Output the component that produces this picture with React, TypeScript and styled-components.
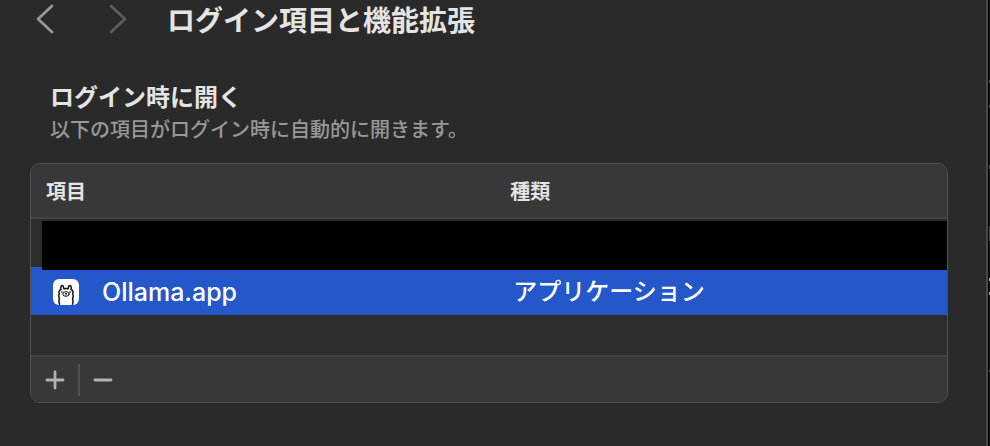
import React from "react";
import styled, { createGlobalStyle } from "styled-components";

const GlobalStyle = createGlobalStyle`
  * { box-sizing: border-box; }
  html, body, #root { height: 100%; }
  body {
    margin: 0;
    background: #000;
    color: #e4e4e4;
    font-family: Inter, "Noto Sans CJK JP", sans-serif;
  }
  button { font: inherit; color: inherit; background: none; border: 0; padding: 0; }
`;

const Screen = styled.div`
  display: flex;
  min-height: 100vh;
  overflow: hidden;
`;

const Pane = styled.main`
  flex: 1;
  min-width: 0;
  padding: 0 38px 0 30px;
  background: #2a2a2a;
  border-right: 2px solid #484848;
`;

const Backdrop = styled.svg`
  flex: none;
  width: 2px;
  height: 446px;
`;

const TitleBar = styled.header`
  display: flex;
  align-items: center;
  height: 38px;
`;

const NavButton = styled.button<{ $dim?: boolean }>`
  display: flex;
  justify-content: center;
  width: 30px;
  margin-right: 43px;
  color: ${(p) => (p.$dim ? "#5c5c5c" : "#979797")};

  & + & { margin-right: 34px; }
`;

const Title = styled.h1`
  margin: 0;
  padding-top: 4px;
  font-size: 28px;
  line-height: 36px;
  font-weight: 700;
  white-space: nowrap;
`;

const Intro = styled.section`
  padding: 43px 20px 18px;
`;

const Heading = styled.h2`
  margin: 0;
  font-size: 24px;
  line-height: 34px;
  font-weight: 700;
`;

const Description = styled.p`
  margin: 0;
  font-size: 20px;
  line-height: 30px;
  font-weight: 500;
  color: #989898;
`;

const Card = styled.section`
  overflow: hidden;
  background: #2d2d2d;
  border: 1px solid #515151;
  border-radius: 10px;
`;

const ItemTable = styled.table`
  width: 100%;
  table-layout: fixed;
  border-collapse: separate;
  border-spacing: 0;
  text-align: left;
`;

const HeadCell = styled.th<{ $width: string; $inset: number }>`
  width: ${(p) => p.$width};
  height: 55px;
  padding: 2px 0 0 ${(p) => p.$inset}px;
  background: #383838;
  border-bottom: 2px solid #424242;
  font-size: 20px;
  line-height: 28px;
  font-weight: 700;
`;

const Row = styled.tr<{ $selected?: boolean }>`
  height: 48px;
  background: ${(p) => (p.$selected ? "#2457ca" : "transparent")};
  color: #fff;
`;

const Cell = styled.td<{ $inset?: number }>`
  position: relative;
  padding: 2px 0 0 ${(p) => p.$inset ?? 0}px;
  font-size: 24px;
  line-height: 34px;
  font-weight: 500;
`;

const Redaction = styled.div`
  position: absolute;
  inset: 2px 0 -3px 11px;
  z-index: 1;
  background: #000;
`;

const AppName = styled.div`
  display: flex;
  align-items: center;
  gap: 23px;
  font-size: 25px;
`;

const EmptyArea = styled.div`
  height: 40px;
`;

const Footer = styled.footer`
  display: flex;
  align-items: center;
  height: 47px;
  background: #383838;
  border-top: 2px solid #424242;
`;

const ToolButton = styled.button`
  display: flex;
  align-items: center;
  justify-content: center;
  width: 47px;
  height: 32px;
  color: #b2b2b2;

  & + & { border-left: 2px solid #505050; }
`;

const Chevron = ({ flip }: { flip?: boolean }) => (
  <svg width="18" height="30" viewBox="0 0 18 30" fill="none" stroke="currentColor"
    strokeWidth="2.8" strokeLinecap="round" strokeLinejoin="round">
    <path d={flip ? "M2 2 16 15 2 28" : "M16 2 2 15 16 28"} />
  </svg>
);

const Glyph = ({ plus }: { plus?: boolean }) => (
  <svg width="20" height="20" viewBox="0 0 20 20" stroke="currentColor" strokeWidth="2.8" strokeLinecap="round">
    <path d={plus ? "M2 10H18M10 2V18" : "M2 10H18"} />
  </svg>
);

const LlamaIcon = () => (
  <svg width="26" height="26" viewBox="0 0 26 26" fill="none" stroke="#111" strokeWidth="1.5"
    strokeLinecap="round" strokeLinejoin="round">
    <rect width="26" height="26" rx="6" fill="#fff" stroke="none" />
    <path d="M6.6 25.2C5.8 23.4 5.8 21.6 6.5 19.8 5.7 18.2 5.6 16.4 6.3 14.800 5.500 12.800 6.300 11 8 10.500 7.500 8.500 8 6.500 9 6.500S10.700 7.900 11 9.900C12.200 9.300 13.800 9.300 15 9.900 15.300 7.900 16 6.500 17 6.500S18.500 8.500 18 10.500C19.700 11 20.500 12.800 19.700 14.800 20.400 16.400 20.300 18.200 19.500 19.800 20.200 21.600 20.200 23.400 19.400 25.200" />
    <ellipse cx="13" cy="15" rx="3.200" ry="2.300" strokeWidth="1" />
    <path d="M12.300 14.500 13 15 13.700 14.500M13 15V15.800" strokeWidth="1" />
    <path d="M8.800 13h.2M17 13h.2" strokeWidth="1.600" />
  </svg>
);

export default function App() {
  return (
    <>
      <GlobalStyle />
      <Screen>
        <Pane>
          <TitleBar>
            <NavButton aria-label="戻る"><Chevron /></NavButton>
            <NavButton aria-label="進む" $dim><Chevron flip /></NavButton>
            <Title>ログイン項目と機能拡張</Title>
          </TitleBar>
          <Intro>
            <Heading>ログイン時に開く</Heading>
            <Description>以下の項目がログイン時に自動的に開きます。</Description>
          </Intro>
          <Card>
            <ItemTable>
              <thead>
                <tr>
                  <HeadCell $width="52%" $inset={15}>項目</HeadCell>
                  <HeadCell $width="48%" $inset={3}>種類</HeadCell>
                </tr>
              </thead>
              <tbody>
                <Row>
                  <Cell colSpan={2}><Redaction /></Cell>
                </Row>
                <Row $selected>
                  <Cell $inset={22}><AppName><LlamaIcon />Ollama.app</AppName></Cell>
                  <Cell $inset={6}>アプリケーション</Cell>
                </Row>
              </tbody>
            </ItemTable>
            <EmptyArea />
            <Footer>
              <ToolButton aria-label="追加"><Glyph plus /></ToolButton>
              <ToolButton aria-label="削除"><Glyph /></ToolButton>
            </Footer>
          </Card>
        </Pane>
        <Backdrop viewBox="0 0 2 446" aria-hidden="true">
          <rect width="2" height="446" fill="#0b0b0b" />
          <path d="M1 80h1v3H1zM1 105h1v3H1zM1 165h1v4H1zM1 370h1v2H1z" fill="#4a4a4a" />
          <path d="M1 226h1v15H1z" fill="#6b3527" />
          <path d="M1 278h1v3H1zM1 292h1v3H1z" fill="#b0b0b0" />
        </Backdrop>
      </Screen>
    </>
  );
}
